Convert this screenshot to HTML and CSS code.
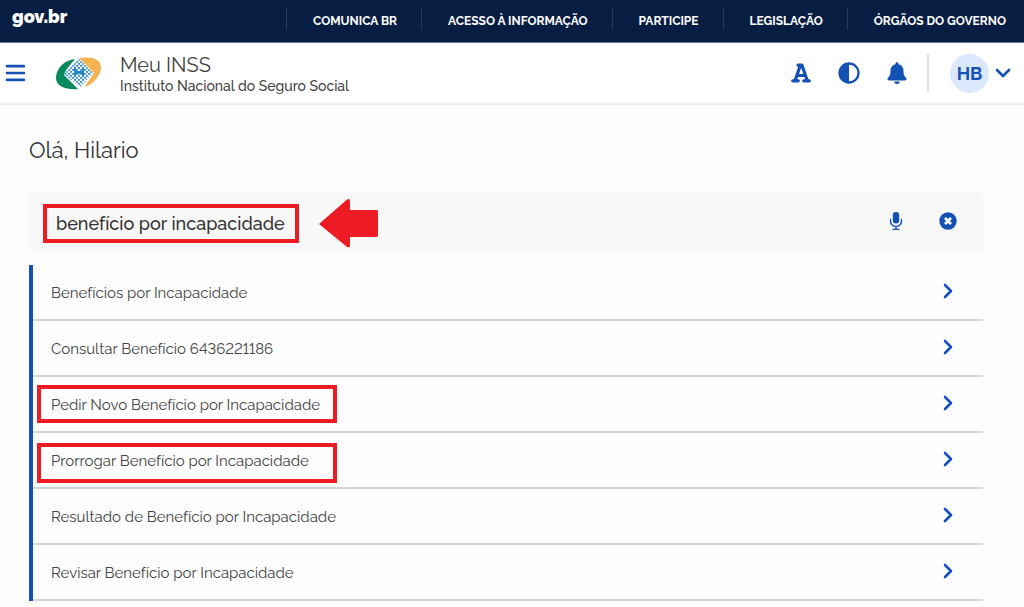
FILE: index.html
```html
<!DOCTYPE html>
<html lang="pt-BR">
<head>
<meta charset="utf-8">
<meta name="viewport" content="width=device-width, initial-scale=1">
<title>Meu INSS</title>
<link rel="stylesheet" href="styles.css">
</head>
<body>
<div class="govbar">
  <a class="govbar-logo" href="#">gov.br</a>
  <nav class="govbar-nav" aria-label="Governo">
    <a href="#">COMUNICA BR</a>
    <a href="#">ACESSO À INFORMAÇÃO</a>
    <a href="#">PARTICIPE</a>
    <a href="#">LEGISLAÇÃO</a>
    <a href="#">ÓRGÃOS DO GOVERNO</a>
  </nav>
</div>
<header class="header">
  <button class="icon-button menu-button" type="button" aria-label="Menu">
    <svg width="20" height="18" viewBox="0 0 20 18"><path d="M2 2.200h17M2 9h17M2 15.800h17" stroke="currentColor" stroke-width="2.700" stroke-linecap="round"/></svg>
  </button>
  <svg class="brand-logo" width="48" height="34" viewBox="0 0 48 34" aria-hidden="true">
    <defs>
      <pattern id="weave" width="4" height="4" patternUnits="userSpaceOnUse" patternTransform="translate(1 1)">
        <rect width="4" height="4" fill="#fff"/>
        <path d="M0 0h2.300v1.800H0zM2 2h2v1.800H2z" fill="#3792c9"/>
      </pattern>
    </defs>
    <path d="M20 3C9 4 1 13 1 22c0 9 11 12 22 11L9 19c2-6 7-11 11-16z" fill="#078a5b"/>
    <path d="M24 2c13-2 22 1 22 9 0 9-8 17-16 20 2-4 4-7 9-14z" fill="#f4b350"/>
    <path d="M24 3 38 17 25 31 9 18z" fill="url(#weave)"/>
    <path d="M19 11h2v4h6v-4h2v10h-2v-3h-6v3h-2z" fill="#2187c5"/>
  </svg>
  <div class="brand">
    <div class="brand-name">Meu INSS</div>
    <div class="brand-sub">Instituto Nacional do Seguro Social</div>
  </div>
  <div class="tools">
    <button class="icon-button font-button" type="button" aria-label="Tamanho da fonte">
      <svg width="20" height="20" viewBox="0 0 20 20"><path d="M7 2.200h4L16 17M9.300 2.500 4.300 17M6 12.500h8M1.700 17.800h5.600M12.700 17.800h5.600" fill="none" stroke="currentColor" stroke-width="3.200" stroke-linecap="round" stroke-linejoin="round"/></svg>
    </button>
    <button class="icon-button" type="button" aria-label="Contraste">
      <svg width="22" height="22" viewBox="0 0 22 22"><circle cx="11" cy="11" r="9.500" fill="none" stroke="currentColor" stroke-width="2.300"/><path d="M11 2a9 9 0 0 0 0 18z" fill="currentColor"/></svg>
    </button>
    <button class="icon-button" type="button" aria-label="Notificações">
      <svg width="20" height="22" viewBox="0 0 20 22" fill="currentColor"><path d="M10 0.300c.9 0 1.500.6 1.500 1.400v.6c3 .6 5 3 5 6.200 0 4.300 1 5.800 2.600 7.400 1 1 .4 2.500-1 2.500H1.900c-1.400 0-2-1.500-1-2.500C2.500 14.300 3.500 12.800 3.500 8.500c0-3.200 2-5.600 5-6.200v-.6c0-.8.600-1.400 1.500-1.400zM7.300 19.400h5.400a2.700 2.500 0 0 1-5.400 0z"/></svg>
    </button>
  </div>
  <button class="icon-button account" type="button" aria-label="Conta de HB">
    <span class="avatar">HB</span>
    <svg width="16" height="10" viewBox="0 0 16 10"><path d="M2 2l6 6 6-6" fill="none" stroke="currentColor" stroke-width="2.600" stroke-linecap="round" stroke-linejoin="round"/></svg>
  </button>
</header>
<main class="content">
  <h1 class="greeting">Olá, Hilario</h1>
  <form class="search">
    <div class="search-field">
      <input class="search-input" type="text" aria-label="Pesquisar serviço" value="benefício por incapacidade">
    </div>
    <svg class="arrow" width="60" height="50" viewBox="0 0 60 50" aria-hidden="true"><path d="M0 26 28 1.500Q31 0 31 3V12H58Q59 12 59 14V37Q59 39 58 39H31V48Q31 50 28 49Z" fill="#ed1c24"/></svg>
    <div class="search-actions">
      <button class="icon-button" type="button" aria-label="Falar">
        <svg width="14" height="20" viewBox="0 0 14 20"><rect x="3.800" y="1" width="6.400" height="11.500" rx="3.200" fill="currentColor"/><path d="M1.500 8.500v1.700c0 3 2.500 5.200 5.500 5.200s5.500-2.200 5.500-5.200V8.500M7 15.500v3M4 18.400h6" fill="none" stroke="currentColor" stroke-width="1.400" stroke-linecap="round"/></svg>
      </button>
      <button class="icon-button" type="reset" aria-label="Limpar">
        <svg width="18" height="18" viewBox="0 0 18 18"><circle cx="9" cy="9" r="8.700" fill="currentColor"/><path d="M6 6l6 6M12 6l-6 6" stroke="#fff" stroke-width="2.700"/></svg>
      </button>
    </div>
  </form>
  <ul class="results">
    <li><a href="#"><span class="label">Benefícios por Incapacidade</span><svg class="chevron" viewBox="0 0 10 16"><path d="M2 2l6 6-6 6"/></svg></a></li>
    <li><a href="#"><span class="label">Consultar Benefício 6436221186</span><svg class="chevron" viewBox="0 0 10 16"><path d="M2 2l6 6-6 6"/></svg></a></li>
    <li><a href="#"><span class="label marked">Pedir Novo Benefício por Incapacidade</span><svg class="chevron" viewBox="0 0 10 16"><path d="M2 2l6 6-6 6"/></svg></a></li>
    <li><a href="#"><span class="label marked marked-low">Prorrogar Benefício por Incapacidade</span><svg class="chevron" viewBox="0 0 10 16"><path d="M2 2l6 6-6 6"/></svg></a></li>
    <li><a href="#"><span class="label">Resultado de Benefício por Incapacidade</span><svg class="chevron" viewBox="0 0 10 16"><path d="M2 2l6 6-6 6"/></svg></a></li>
    <li><a href="#"><span class="label">Revisar Benefício por Incapacidade</span><svg class="chevron" viewBox="0 0 10 16"><path d="M2 2l6 6-6 6"/></svg></a></li>
  </ul>
</main>
</body>
</html>
```
FILE: styles.css
```css
*,
*::after {
  box-sizing: border-box;
}

body {
  margin: 0;
  background: #fdfdfd;
  color: #444;
  font-family: Raleway, Lato, "Open Sans", sans-serif;
  font-size: 15px;
  font-variant-numeric: lining-nums;
}

a {
  color: inherit;
  text-decoration: none;
}

svg {
  display: block;
  flex: none;
}

.govbar {
  display: flex;
  justify-content: space-between;
  height: 43px;
  padding: 0 18px 0 12px;
  background: #071d41;
  border-bottom: 1px solid #6b7590;
  color: #fff;
}

.govbar-logo {
  padding-top: 5px;
  font: 900 18px/24px Raleway, "Open Sans", sans-serif;
}

.govbar-nav {
  display: flex;
  gap: 24px;
  padding-top: 8px;
}

.govbar-nav a {
  height: 22px;
  padding-left: 26px;
  border-left: 1px solid #26395a;
  font-size: 12px;
  font-weight: 700;
  line-height: 27px;
  white-space: nowrap;
}

.header {
  display: flex;
  align-items: center;
  height: 62px;
  padding: 0 13px 0 5px;
  background: #fff;
  border-bottom: 2px solid #ececec;
}

.icon-button {
  display: flex;
  align-items: center;
  padding: 0;
  border: 0;
  background: none;
  color: #1351b4;
}

.brand-logo {
  margin-left: 30px;
}

.brand {
  margin-left: 17px;
  padding-top: 3px;
  white-space: nowrap;
}

.brand-name {
  font-size: 20px;
  line-height: 22px;
}

.brand-sub {
  font-size: 14px;
  font-weight: 500;
  line-height: 20px;
}

.tools {
  display: flex;
  align-items: center;
  gap: 27px;
  height: 38px;
  margin-left: auto;
  padding-right: 20px;
  border-right: 2px solid #e4e4e4;
}

.account {
  gap: 6px;
  margin-left: 21px;
}

.avatar {
  width: 39px;
  border-radius: 50%;
  background: #dbe8fb;
  font: 700 18px/39px Raleway, Lato, sans-serif;
  text-align: center;
}

.content {
  padding: 31px 41px 0 29px;
}

.greeting {
  margin: 0;
  color: #333;
  font-size: 22px;
  font-weight: 400;
  line-height: 28px;
}

.search {
  display: flex;
  align-items: center;
  height: 60px;
  margin-top: 28px;
  padding: 2px 26px 0 14px;
  border-radius: 5px;
  background: #f8f8f8;
}

.search-field {
  width: 256px;
  border: 4px solid #ed1c24;
}

.search-input {
  display: block;
  width: 100%;
  height: 31px;
  padding: 0 0 0 9px;
  border: 0;
  background: none;
  color: #333;
  font: 500 18px/31px Raleway, Lato, sans-serif;
}

.arrow {
  margin-left: 20px;
}

.search-actions {
  display: flex;
  align-items: center;
  gap: 36px;
  margin-left: auto;
  padding-bottom: 4px;
}

.results {
  margin: 13px 0 0;
  padding: 0;
  border-left: 4px solid #1351b4;
  list-style: none;
}

.results a {
  display: flex;
  align-items: center;
  justify-content: space-between;
  height: 56px;
  padding: 0 30px 2px 18px;
  border-bottom: 2px solid #d6d6d6;
}

.label {
  padding-top: 3px;
}

.marked {
  position: relative;
}

.marked::after {
  content: "";
  position: absolute;
  top: -8px;
  left: -14px;
  width: 300px;
  height: 38px;
  border: 4px solid #ed1c24;
}

.marked-low::after {
  top: -6px;
  height: 40px;
}

.chevron {
  width: 10px;
  height: 16px;
  fill: none;
  stroke: #1351b4;
  stroke-width: 2.6;
  stroke-linecap: round;
  stroke-linejoin: round;
}
```
